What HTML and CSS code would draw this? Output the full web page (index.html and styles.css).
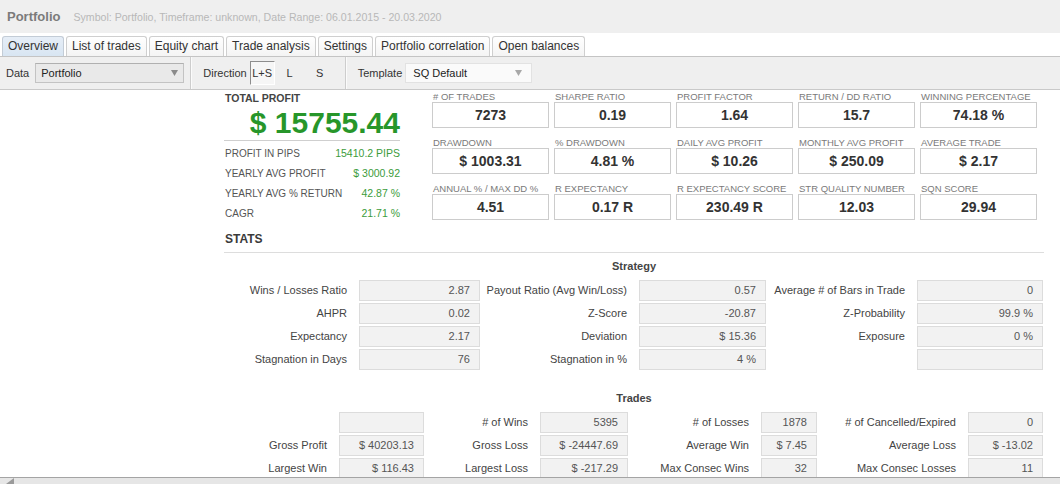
FILE: index.html
```html
<!DOCTYPE html>
<html lang="en">
<head>
<meta charset="utf-8">
<title>Portfolio</title>
<link rel="stylesheet" href="styles.css">
</head>
<body>
<div class="app">
  <header class="titlebar">
    <span class="title">Portfolio</span>
    <span class="subtitle">Symbol: Portfolio, Timeframe: unknown, Date Range: 06.01.2015 - 20.03.2020</span>
  </header>

  <nav class="tabs">
    <div class="tab active">Overview</div>
    <div class="tab">List of trades</div>
    <div class="tab">Equity chart</div>
    <div class="tab">Trade analysis</div>
    <div class="tab">Settings</div>
    <div class="tab">Portfolio correlation</div>
    <div class="tab">Open balances</div>
  </nav>

  <div class="toolbar">
    <div class="tgroup">
      <span class="tlabel">Data</span>
      <div class="select data-select">
        <span>Portfolio</span>
        <svg class="arrow" width="7" height="6" viewBox="0 0 7 6"><path d="M0 0H7L3.5 6Z" fill="#8a8a8a"/></svg>
      </div>
    </div>
    <div class="sep"></div>
    <div class="tgroup">
      <span class="tlabel">Direction</span>
      <span class="dir pressed">L+S</span>
      <span class="dir">L</span>
      <span class="dir">S</span>
    </div>
    <div class="sep"></div>
    <div class="tgroup">
      <span class="tlabel">Template</span>
      <div class="select tpl-select">
        <span>SQ Default</span>
        <svg class="arrow" width="7" height="6" viewBox="0 0 7 6"><path d="M0 0H7L3.5 6Z" fill="#a8a8a8"/></svg>
      </div>
    </div>
  </div>

  <main class="content">
    <div class="inner">
      <section class="summary">
        <div class="total">
          <div class="total-label">TOTAL PROFIT</div>
          <div class="total-value">$ 15755.44</div>
          <div class="trow"><span>PROFIT IN PIPS</span><span class="pos">15410.2 PIPS</span></div>
          <div class="trow"><span>YEARLY AVG PROFIT</span><span class="pos">$ 3000.92</span></div>
          <div class="trow"><span>YEARLY AVG % RETURN</span><span class="pos">42.87 %</span></div>
          <div class="trow"><span>CAGR</span><span class="pos">21.71 %</span></div>
        </div>
        <div class="metrics">
          <div class="metric"><div class="mlabel"># OF TRADES</div><div class="mbox">7273</div></div>
          <div class="metric"><div class="mlabel">SHARPE RATIO</div><div class="mbox">0.19</div></div>
          <div class="metric"><div class="mlabel">PROFIT FACTOR</div><div class="mbox">1.64</div></div>
          <div class="metric"><div class="mlabel">RETURN / DD RATIO</div><div class="mbox">15.7</div></div>
          <div class="metric"><div class="mlabel">WINNING PERCENTAGE</div><div class="mbox">74.18 %</div></div>
          <div class="metric"><div class="mlabel">DRAWDOWN</div><div class="mbox">$ 1003.31</div></div>
          <div class="metric"><div class="mlabel">% DRAWDOWN</div><div class="mbox">4.81 %</div></div>
          <div class="metric"><div class="mlabel">DAILY AVG PROFIT</div><div class="mbox">$ 10.26</div></div>
          <div class="metric"><div class="mlabel">MONTHLY AVG PROFIT</div><div class="mbox">$ 250.09</div></div>
          <div class="metric"><div class="mlabel">AVERAGE TRADE</div><div class="mbox">$ 2.17</div></div>
          <div class="metric"><div class="mlabel">ANNUAL % / MAX DD %</div><div class="mbox">4.51</div></div>
          <div class="metric"><div class="mlabel">R EXPECTANCY</div><div class="mbox">0.17 R</div></div>
          <div class="metric"><div class="mlabel">R EXPECTANCY SCORE</div><div class="mbox">230.49 R</div></div>
          <div class="metric"><div class="mlabel">STR QUALITY NUMBER</div><div class="mbox">12.03</div></div>
          <div class="metric"><div class="mlabel">SQN SCORE</div><div class="mbox">29.94</div></div>
        </div>
      </section>

      <h2 class="stats-title">STATS</h2>

      <h3 class="group-title">Strategy</h3>
      <div class="sgrid strategy">
        <div class="lbl">Wins / Losses Ratio</div><div class="val">2.87</div>
        <div class="lbl">Payout Ratio (Avg Win/Loss)</div><div class="val">0.57</div>
        <div class="lbl">Average # of Bars in Trade</div><div class="val">0</div>

        <div class="lbl">AHPR</div><div class="val">0.02</div>
        <div class="lbl">Z-Score</div><div class="val">-20.87</div>
        <div class="lbl">Z-Probability</div><div class="val">99.9 %</div>

        <div class="lbl">Expectancy</div><div class="val">2.17</div>
        <div class="lbl">Deviation</div><div class="val">$ 15.36</div>
        <div class="lbl">Exposure</div><div class="val">0 %</div>

        <div class="lbl">Stagnation in Days</div><div class="val">76</div>
        <div class="lbl">Stagnation in %</div><div class="val">4 %</div>
        <div class="lbl"></div><div class="val"></div>
      </div>

      <h3 class="group-title trades-title">Trades</h3>
      <div class="sgrid trades">
        <div class="lbl"></div><div class="val"></div>
        <div class="lbl"># of Wins</div><div class="val">5395</div>
        <div class="lbl"># of Losses</div><div class="val">1878</div>
        <div class="lbl"># of Cancelled/Expired</div><div class="val">0</div>

        <div class="lbl">Gross Profit</div><div class="val">$ 40203.13</div>
        <div class="lbl">Gross Loss</div><div class="val">$ -24447.69</div>
        <div class="lbl">Average Win</div><div class="val">$ 7.45</div>
        <div class="lbl">Average Loss</div><div class="val">$ -13.02</div>

        <div class="lbl">Largest Win</div><div class="val">$ 116.43</div>
        <div class="lbl">Largest Loss</div><div class="val">$ -217.29</div>
        <div class="lbl">Max Consec Wins</div><div class="val">32</div>
        <div class="lbl">Max Consec Losses</div><div class="val">11</div>
      </div>
    </div>
  </main>

  <div class="hscroll">
    <svg class="grip" width="8" height="6" viewBox="0 0 8 6"><path d="M0 6L8 0V6Z" fill="#9a9a9a"/></svg>
  </div>
</div>
</body>
</html>
```

FILE: styles.css
```css
* { box-sizing: border-box; }

html, body {
  margin: 0;
  padding: 0;
  background: #ffffff;
}

body {
  font-family: "Liberation Sans", Arial, sans-serif;
  color: #333;
}

.app {
  width: 1060px;
  height: 484px;
  display: flex;
  flex-direction: column;
  overflow: hidden;
}

/* Title bar */
.titlebar {
  height: 33px;
  flex: none;
  background: #efefef;
  display: flex;
  align-items: center;
  padding-left: 7px;
}
.title {
  font-size: 13px;
  font-weight: bold;
  color: #7b7b7b;
}
.subtitle {
  font-size: 10.6px;
  color: #b8b8b8;
  margin-left: 13px;
}

/* Tabs */
.tabs {
  height: 24px;
  flex: none;
  display: flex;
  align-items: flex-end;
  gap: 2px;
  padding-left: 2px;
  background: #ffffff;
  border-bottom: 1px solid #c4c4c4;
}
.tab {
  height: 20px;
  line-height: 19px;
  padding: 0 5px;
  font-size: 12px;
  color: #333;
  border: 1px solid #cfcfcf;
  border-bottom: none;
  border-radius: 3px 3px 0 0;
  background: linear-gradient(#ffffff, #f4f4f4);
}
.tab.active {
  background: linear-gradient(#e6eef7, #d8e5f2);
  border-color: #c3ccd6;
}

/* Toolbar */
.toolbar {
  height: 33px;
  flex: none;
  display: flex;
  align-items: stretch;
  background: #efefef;
  border-bottom: 1px solid #c9c9c9;
  padding-left: 6px;
  font-size: 11px;
}
.tgroup {
  display: flex;
  align-items: center;
}
.tlabel {
  color: #333;
}
.select {
  height: 20px;
  display: flex;
  align-items: center;
  justify-content: space-between;
  padding: 0 5px 0 5px;
  margin-left: 6px;
  color: #222;
  font-size: 11px;
}
.data-select {
  width: 149px;
  background: #e9e9e9;
  border: 1px solid #c3c3c3;
  border-top-color: #b0b0b0;
}
.tpl-select {
  width: 127px;
  margin-left: 3px;
  background: #fafafa;
  border: 1px solid #e2e2e2;
  padding-left: 7px;
  padding-right: 9px;
}
.arrow { flex: none; }

.sep {
  width: 2px;
  margin: 0 11px 0 6px;
  border-left: 1px solid #cdcdcd;
  border-right: 1px solid #fbfbfb;
}

.dir {
  width: 30px;
  height: 24px;
  line-height: 24px;
  text-align: center;
  color: #333;
}
.dir:last-child { margin-right: 4px; }
.dir.pressed {
  width: 25px;
  margin-left: 3px;
  background: #f6f6f6;
  border-left: 1px solid #8d8d8d;
  border-top: 1px solid #8d8d8d;
  border-right: 1px solid #ffffff;
  border-bottom: 1px solid #ffffff;
  line-height: 22px;
}

/* Content */
.content {
  flex: 1;
  min-height: 0;
  overflow: hidden;
  background: #ffffff;
}
.inner {
  width: 820px;
  margin-left: 224px;
}

.summary {
  display: flex;
  padding-top: 1px;
}
.total {
  width: 176px;
  flex: none;
}
.total-label {
  margin-top: 1px;
  padding-left: 1px;
  font-size: 10.5px;
  line-height: 12px;
  font-weight: bold;
  color: #444;
}
.total-value {
  margin-top: 3px;
  font-size: 30px;
  line-height: 32px;
  font-weight: bold;
  color: #27962a;
  text-align: right;
  padding-bottom: 1px;
  border-bottom: 1px solid #cfcfcf;
}
.trow {
  display: flex;
  justify-content: space-between;
  align-items: baseline;
  height: 20px;
  line-height: 20px;
  padding-left: 1px;
  font-size: 10px;
  color: #555;
}
.total-value + .trow { margin-top: 2px; }
.pos {
  color: #3c9c3c;
  font-size: 10.5px;
}

.metrics {
  margin-left: 32px;
  display: grid;
  grid-template-columns: repeat(5, 117px);
  column-gap: 5px;
  row-gap: 9px;
  align-content: start;
}
.mlabel {
  font-size: 9.5px;
  line-height: 11px;
  color: #7a7a7a;
  padding-left: 1px;
  white-space: nowrap;
}
.mbox {
  height: 26px;
  line-height: 24px;
  border: 1px solid #cccccc;
  text-align: center;
  font-size: 14px;
  font-weight: bold;
  color: #333;
}

.stats-title {
  margin: 9px 0 0 0;
  padding: 0 0 6px 1px;
  font-size: 12px;
  line-height: 14px;
  font-weight: bold;
  color: #3a3a3a;
  border-bottom: 1px solid #dddddd;
}

.group-title {
  margin: 6px 0 7px 0;
  font-size: 11px;
  line-height: 14px;
  font-weight: bold;
  color: #444;
  text-align: center;
}
.trades-title {
  margin-top: 21px;
}

.sgrid {
  display: grid;
  row-gap: 2px;
}
.strategy {
  grid-template-columns: 135px 121px 159px 127px 151px 126px;
}
.trades {
  grid-template-columns: 115px 85px 116px 88px 133px 56px 151px 75px;
}
.lbl {
  height: 21px;
  line-height: 21px;
  text-align: right;
  padding-right: 12px;
  font-size: 11px;
  color: #444;
  white-space: nowrap;
}
.val {
  height: 21px;
  line-height: 19px;
  text-align: right;
  padding-right: 9px;
  font-size: 11px;
  color: #555;
  background: #f2f2f2;
  border: 1px solid #dcdcdc;
  white-space: nowrap;
}

.hscroll {
  height: 7px;
  flex: none;
  background: #e6e6e6;
  border-top: 1px solid #a4a4a4;
  padding-left: 6px;
  display: flex;
  align-items: flex-start;
}
.grip { display: block; }
```
